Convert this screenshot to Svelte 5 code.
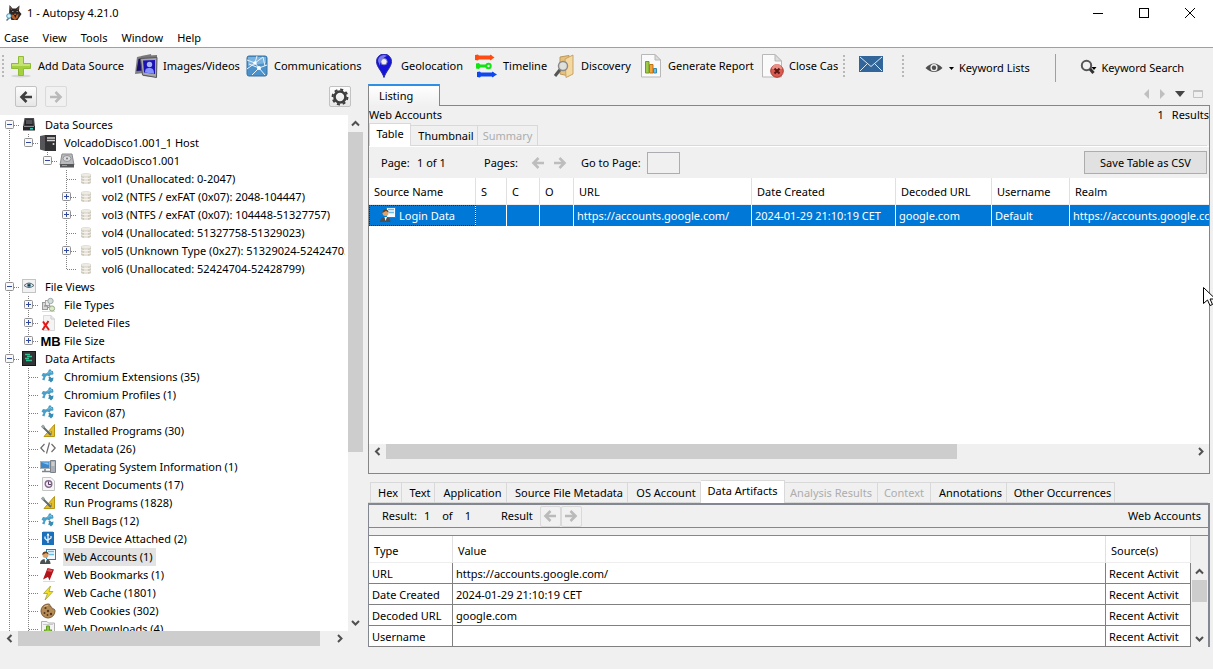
<script>
	const menus = ['Case', 'View', 'Tools', 'Window', 'Help'];

	const tools = [
		{ icon: 'plus', label: 'Add Data Source' },
		{ icon: 'images', label: 'Images/Videos' },
		{ icon: 'network', label: 'Communications' },
		{ icon: 'pin', label: 'Geolocation' },
		{ icon: 'timeline', label: 'Timeline' },
		{ icon: 'discovery', label: 'Discovery' },
		{ icon: 'report', label: 'Generate Report' },
		{ icon: 'close', label: 'Close Case' }
	];

	const nodes = [
		{ level: 0, exp: '-', icon: 'drive', label: 'Data Sources' },
		{ level: 1, exp: '-', icon: 'host', label: 'VolcadoDisco1.001_1 Host' },
		{ level: 2, exp: '-', icon: 'disk', label: 'VolcadoDisco1.001' },
		{ level: 3, exp: '', icon: 'volume', label: 'vol1 (Unallocated: 0-2047)' },
		{ level: 3, exp: '+', icon: 'volume', label: 'vol2 (NTFS / exFAT (0x07): 2048-104447)' },
		{ level: 3, exp: '+', icon: 'volume', label: 'vol3 (NTFS / exFAT (0x07): 104448-51327757)' },
		{ level: 3, exp: '', icon: 'volume', label: 'vol4 (Unallocated: 51327758-51329023)' },
		{ level: 3, exp: '+', icon: 'volume', label: 'vol5 (Unknown Type (0x27): 51329024-52424703)' },
		{ level: 3, exp: '', icon: 'volume', label: 'vol6 (Unallocated: 52424704-52428799)' },
		{ level: 0, exp: '-', icon: 'views', label: 'File Views' },
		{ level: 1, exp: '+', icon: 'types', label: 'File Types' },
		{ level: 1, exp: '+', icon: 'deleted', label: 'Deleted Files' },
		{ level: 1, exp: '+', icon: 'size', label: 'File Size' },
		{ level: 0, exp: '-', icon: 'artifacts', label: 'Data Artifacts' },
		{ level: 1, exp: '', icon: 'puzzle', label: 'Chromium Extensions (35)' },
		{ level: 1, exp: '', icon: 'puzzle', label: 'Chromium Profiles (1)' },
		{ level: 1, exp: '', icon: 'puzzle', label: 'Favicon (87)' },
		{ level: 1, exp: '', icon: 'program', label: 'Installed Programs (30)' },
		{ level: 1, exp: '', icon: 'code', label: 'Metadata (26)' },
		{ level: 1, exp: '', icon: 'computer', label: 'Operating System Information (1)' },
		{ level: 1, exp: '', icon: 'recent', label: 'Recent Documents (17)' },
		{ level: 1, exp: '', icon: 'program', label: 'Run Programs (1828)' },
		{ level: 1, exp: '', icon: 'puzzle', label: 'Shell Bags (12)' },
		{ level: 1, exp: '', icon: 'usb', label: 'USB Device Attached (2)' },
		{ level: 1, exp: '', icon: 'account', label: 'Web Accounts (1)' },
		{ level: 1, exp: '', icon: 'bookmark', label: 'Web Bookmarks (1)' },
		{ level: 1, exp: '', icon: 'bolt', label: 'Web Cache (1801)' },
		{ level: 1, exp: '', icon: 'cookie', label: 'Web Cookies (302)' },
		{ level: 1, exp: '', icon: 'download', label: 'Web Downloads (4)' }
	];

	let selected = $state('Web Accounts (1)');

	const viewTabs = ['Table', 'Thumbnail', 'Summary'];
	const contentTabs = ['Hex', 'Text', 'Application', 'Source File Metadata', 'OS Account', 'Data Artifacts', 'Analysis Results', 'Context', 'Annotations', 'Other Occurrences'];
	const disabledTabs = ['Summary', 'Analysis Results', 'Context'];
	let viewTab = $state('Table');
	let contentTab = $state('Data Artifacts');

	const columns = ['Source Name', 'S', 'C', 'O', 'URL', 'Date Created', 'Decoded URL', 'Username', 'Realm'];
	const record = ['', '', '', 'https://accounts.google.com/', '2024-01-29 21:10:19 CET', 'google.com', 'Default', 'https://accounts.google.com/'];

	const attributes = [
		['URL', 'https://accounts.google.com/'],
		['Date Created', '2024-01-29 21:10:19 CET'],
		['Decoded URL', 'google.com'],
		['Username', '']
	];

	// Does a node at this level have another sibling further down?
	// The artifact list goes on past the last row, so its lines stay open
	function hasNext(index, level) {
		for (let i = index + 1; i < nodes.length; i++) {
			if (nodes[i].level < level) return false;
			if (nodes[i].level === level) return true;
		}
		return level < 2;
	}
</script>

{#snippet guide(node, index, level)}
	<svg class="guide" width="19" height="18" viewBox="0 0 19 18">
		{#if level < node.level}
			{#if hasNext(index, level)}
				<path d="M9.5 0V18" stroke="#808080" stroke-dasharray="1 1" />
			{/if}
		{:else}
			{#if index > 0}
				<path d="M9.5 0V9" stroke="#808080" stroke-dasharray="1 1" />
			{/if}
			{#if hasNext(index, level)}
				<path d="M9.5 10V18" stroke="#808080" stroke-dasharray="1 1" />
			{/if}
			<path d="M10 9.5H19" stroke="#808080" stroke-dasharray="1 1" />
			{#if node.exp}
				<rect x="5.5" y="4.5" width="8" height="8" rx="1" fill="#f8f8f8" stroke="#919191" />
				<path d="M7 8.5H12" stroke="#31479e" />
				{#if node.exp === '+'}
					<path d="M9.5 6V11" stroke="#31479e" />
				{/if}
			{/if}
		{/if}
	</svg>
{/snippet}

{#snippet arrow(dir)}
	<svg width="17" height="17" viewBox="0 0 17 17">
		{#if dir === 'up'}
			<path d="M5 10.5L8.5 7L12 10.5" fill="none" stroke="#505050" stroke-width="2" />
		{:else if dir === 'down'}
			<path d="M5 7L8.5 10.5L12 7" fill="none" stroke="#505050" stroke-width="2" />
		{:else if dir === 'left'}
			<path d="M10.5 5L7 8.5L10.5 12" fill="none" stroke="#505050" stroke-width="2" />
		{:else}
			<path d="M7 5L10.5 8.5L7 12" fill="none" stroke="#505050" stroke-width="2" />
		{/if}
	</svg>
{/snippet}

{#snippet navArrow(dir)}
	<svg width="16" height="16" viewBox="0 0 16 16" fill="none" stroke="currentColor" stroke-width="2.6">
		{#if dir === 'left'}
			<path d="M8.5 3L3.5 8L8.5 13M4 8H14" />
		{:else}
			<path d="M7.5 3L12.5 8L7.5 13M12 8H2" />
		{/if}
	</svg>
{/snippet}

{#snippet toolIcon(name)}
	<svg width="24" height="24" viewBox="0 0 24 24">
		{#if name === 'plus'}
			<ellipse cx="12" cy="22" rx="10" ry="1.5" fill="#d5d5d5" />
			<path d="M9.5 2.5H14.5V9.5H21.5V14.5H14.5V21.5H9.5V14.5H2.5V9.5H9.5Z" fill="#a4d03f" stroke="#8ebc34" />
			<path d="M10 3H14V10H21V12H3V10H10Z" fill="#c4e372" />
		{:else if name === 'images'}
			<path d="M3 3L17 0L19 18L1 20Z" fill="#7d7d80" />
			<path d="M4.5 5L16 2.5L16 16L2.5 17Z" fill="#19106f" />
			<path d="M7 2L23 1V23L9 22Z" fill="#77777b" />
			<path d="M6.5 4.5L23 3.5L22.5 23.5L8.5 21Z" fill="#a6a6aa" stroke="#55555a" />
			<path d="M9 6.5L21 6V20L10 18.5Z" fill="#1c12b4" />
			<circle cx="15.5" cy="10.5" r="2.7" fill="#a8b4ff" />
			<path d="M11 18.6C11 14.5 13 14 15.5 14S20 15 20 19.8Z" fill="#8592ff" />
		{:else if name === 'network'}
			<rect x="2" y="2" width="20" height="20" rx="2" fill="#4b92cc" stroke="#37719f" />
			<path d="M3 3H21V9L3 12Z" fill="#79b2de" />
			<path d="M2 6L10 9L18 3M10 9L14 14L7 21M14 14L22 11M14 14L20 21M2 15L10 9M10 9L12 2M14 14L4 10M18 3L20 12" fill="none" stroke="#e7f3fc" />
			<circle cx="10" cy="9" r="1.7" fill="#fff" />
			<circle cx="14" cy="14" r="2" fill="#fff" />
		{:else if name === 'pin'}
			<path d="M12 23.5C10 17 4.5 13 4.5 7.5A7.5 7.5 0 0 1 19.5 7.5C19.5 13 14 17 12 23.5Z" fill="#1414d8" stroke="#2a2aa5" />
			<path d="M6 7A6 6 0 0 1 15 1.8C10 4 8 8 8 12Z" fill="#7777f0" />
			<circle cx="12" cy="7.7" r="3.2" fill="#efefef" stroke="#7878b8" />
		{:else if name === 'timeline'}
			<path d="M3 3.5H18" stroke="#ff4b12" stroke-width="4" />
			<path d="M3 12H15" stroke="#13e313" stroke-width="3" />
			<path d="M5 20.5H20" stroke="#0d47ef" stroke-width="4" />
			<g fill="#ff4b12"><path d="M1 1L4 0.5L6 3.5L4 6.5L1 6Z" /><path d="M16 0.5L20.5 3.5L16 6.5Z" /></g>
			<g fill="#13e313"><path d="M2 9.5L5 9L7 12L5 15L2 14.5Z" /><circle cx="14.5" cy="12" r="3.2" /></g>
			<circle cx="14.5" cy="12" r="1.2" fill="#efefef" />
			<g fill="#0d47ef"><path d="M3 18L6 17.5L8 20.5L6 23.500L3 23Z" /><path d="M18 17.5L23 20.5L18 23.5Z" /></g>
		{:else if name === 'discovery'}
			<path d="M8 3L17 1.5V22L8 20Z" fill="#e6c17d" stroke="#bd9857" />
			<path d="M13 5L21 1V20L14 23.5Z" fill="#f4d8a0" stroke="#c7a367" />
			<path d="M8.5 15L3 22" stroke="#555" stroke-width="3" />
			<circle cx="11" cy="12" r="4.5" fill="#dfe6ec" fill-opacity="0.85" stroke="#8a8a8a" stroke-width="1.5" />
		{:else if name === 'report'}
			<path d="M2.5 0.5H16L21.5 6V23H2.5Z" fill="#fafafa" stroke="#b8b8b8" />
			<path d="M16 0.5V6H21.5Z" fill="#ddd" stroke="#b8b8b8" />
			<path d="M6.5 7.5H10V19H6.500Z" fill="#9dcb49" stroke="#6f9a27" />
			<path d="M10.5 10.5H14V19H10.5Z" fill="#f3a23c" stroke="#bd7317" />
			<path d="M14.5 14.5H17.5V19H14.5Z" fill="#68bfe8" stroke="#338ab3" />
		{:else}
			<path d="M2.5 0.5H15L21.5 7V23H2.5Z" fill="#fafafa" stroke="#b8b8b8" />
			<path d="M15 0.5V7H21.5Z" fill="#ddd" stroke="#b8b8b8" />
			<circle cx="17" cy="17" r="6.3" fill="#db5b50" stroke="#a93c34" />
			<path d="M12 15A5 5 0 0 1 22 15Z" fill="#ec9087" />
			<path d="M14.5 14.5L19.5 19.5M19.5 14.5L14.5 19.5" stroke="#5d1712" stroke-width="2" />
		{/if}
	</svg>
{/snippet}

{#snippet treeIcon(name)}
	<svg width="16" height="16" viewBox="0 0 16 16">
		{#if name === 'drive'}
			<path d="M3.5 1H13L14 10H2Z" fill="#4a4a4f" />
			<path d="M4.5 2.5H12L12.5 8.5H3.5Z" fill="#202024" />
			<path d="M5 4H11.5M5 6H11.5" stroke="#88888d" />
			<rect x="2" y="9" width="12" height="4.5" fill="#27272b" />
			<path d="M3 9.5H13" stroke="#8e8e93" />
			<rect x="9" y="11" width="3" height="1.5" fill="#38c7b4" />
		{:else if name === 'host'}
			<path d="M0 1L5 0V16L0 14.5Z" fill="#56565a" />
			<rect x="5" y="0" width="11" height="16" fill="#323235" />
			<path d="M7 3H15M7 5.5H15" stroke="#d4d4d4" stroke-width="1.3" />
			<circle cx="13.5" cy="9" r="1" fill="#ddd" />
		{:else if name === 'disk'}
			<path d="M3 1H13L15 12H1Z" fill="#b9babd" stroke="#8c8c8f" />
			<ellipse cx="8" cy="5.5" rx="4" ry="3" fill="#d9dadc" stroke="#949599" />
			<circle cx="8" cy="5.5" r="1" fill="#77777a" />
			<rect x="1" y="11" width="14" height="3.5" fill="#55565a" />
			<path d="M3 12.5H8" stroke="#9b9b9e" />
		{:else if name === 'volume'}
			<path d="M3 4V11.5C3 13.5 13 13.5 13 11.5V4Z" fill="#d0cabd" />
			<path d="M6 4H10V13H6Z" fill="#e6e2d8" />
			<path d="M3 6.5C4 8 12 8 13 6.5M3 9.5C4 11 12 11 13 9.5" fill="none" stroke="#f8f6f1" />
			<ellipse cx="8" cy="4" rx="5" ry="1.5" fill="#f0ede6" stroke="#d8d4ca" stroke-width="0.7" />
		{:else if name === 'views'}
			<rect x="1.5" y="0.5" width="13" height="13" fill="#f2f2f2" stroke="#c4c4c4" />
			<path d="M3 6.5Q8 1.5 13 6.5Q8 10.5 3 6.5Z" fill="#e1e7ea" stroke="#59666d" />
			<circle cx="8" cy="6.200" r="2" fill="#528199" />
			<circle cx="8" cy="6.2" r="0.9" fill="#15252d" />
		{:else if name === 'types'}
			<path d="M2 14.5H15" stroke="#ddd" />
			<rect x="2.5" y="5.5" width="5" height="7" fill="#d7d7d7" stroke="#999" />
			<rect x="5.5" y="3.5" width="4" height="5" fill="#ebebeb" stroke="#a6a6a6" />
			<circle cx="10.5" cy="4" r="2.7" fill="#d5dedc" stroke="#9eaaa7" />
			<circle cx="12" cy="11.5" r="2.6" fill="#dceacb" stroke="#96ab83" />
			<path d="M4 9H7M10 8.5L8 11" stroke="#858585" />
		{:else if name === 'deleted'}
			<path d="M3.5 0.5H11L14.5 4V15.5H3.5Z" fill="#f4f4f4" stroke="#d9d9d9" />
			<path d="M11 0.5V4H14.5" fill="none" stroke="#cacaca" />
			<path d="M3 6.5L9 15M8.5 6L2.5 15" stroke="#e31515" stroke-width="2" />
		{:else if name === 'artifacts'}
			<rect x="1.5" y="0.5" width="13" height="14" fill="#333536" stroke="#161818" />
			<path d="M4 3.5H9M6 5.5H11M4 7.5H8M5 9.500H11" stroke="#2fc393" stroke-width="1.5" />
		{:else if name === 'puzzle'}
			<path d="M9 0.5L11 0.5L11.500 2H13L13.5 5L12 6L11 5.5L9.5 7.5L7 6.5L5.5 8L4.5 11.5L2 10.5L3.5 8L1.5 6.500L3 4L6 4.5L8 3Z" fill="#4a9fc6" />
			<path d="M8.5 8L10 7.5L11.5 9L13.5 8.5L13 11.5L11 13.5L9.5 12L8 11.5L9 10Z" fill="#378db6" />
			<path d="M8 4.5L10 2.5L12 3.5" fill="none" stroke="#8cc8e2" />
		{:else if name === 'program'}
			<path d="M14.5 1.5V13.5H4Z" fill="#e3bf2d" stroke="#b89514" />
			<path d="M11.5 8V11H8.5Z" fill="#fff7c9" stroke="#b89514" />
			<path d="M2 3L11 12" stroke="#626b6c" stroke-width="2" />
			<path d="M2 2.500L4 4.5" stroke="#9ba7a9" stroke-width="3" />
		{:else if name === 'code'}
			<path d="M4.5 3L0.8 7L4.5 11M11.5 3L15.2 7L11.5 11M9.5 1.5L6.5 12.5" fill="none" stroke="#6c6c6c" stroke-width="1.2" />
		{:else if name === 'computer'}
			<rect x="0.5" y="2.5" width="9" height="7" fill="#3c88ca" stroke="#a6b1ba" />
			<path d="M1.5 3.5H8.5V6Z" fill="#8dc4ec" />
			<path d="M2 12.5H10M5 10V12" stroke="#7d8388" stroke-width="1.5" />
			<path d="M10.5 1.5H15.5V13.5H10.5Z" fill="#a9afb4" stroke="#7d8388" />
			<path d="M11.5 4H14.5M11.5 6H14.5" stroke="#eee" />
		{:else if name === 'recent'}
			<path d="M2.5 0.5H11L14.5 4V13.5H2.5Z" fill="#f6f6f6" stroke="#c4c4c4" />
			<circle cx="8.5" cy="7" r="3.3" fill="#efe6f2" stroke="#83658f" stroke-width="1.4" />
			<path d="M8.500 4.5V7.5H11" fill="none" stroke="#544059" />
		{:else if name === 'usb'}
			<rect x="2" y="1" width="12" height="13" fill="#1c70b9" />
			<path d="M3 0.5H13" stroke="#c3d7a7" />
			<path d="M8 3V12M8 10L5 7.5V5.5M8 9L11 7V5" fill="none" stroke="#e7f4ff" stroke-width="1.3" />
			<path d="M8 2L6.5 4.5H9.5Z" fill="#fff" />
		{:else if name === 'account'}
			<rect x="6.5" y="0.500" width="9" height="10" fill="#f4faff" stroke="#1787c4" />
			<path d="M8 2.5H14M9 5.5H14" stroke="#66bde8" stroke-width="1.5" />
			<path d="M0 15C0 11 3 10 5.5 10S10.5 11 10.5 15Z" fill="#4b5053" />
			<path d="M4.5 10L5.5 14L7 10Z" fill="#fff" />
			<circle cx="5.5" cy="6" r="3" fill="#dca46d" />
			<path d="M2.3 6C2 1.5 8.5 1.5 8.7 5.500L6 4Z" fill="#6b3d17" />
		{:else if name === 'bookmark'}
			<path d="M3 14.5H15" stroke="#ddd" />
			<path d="M7.5 1L14 2.5L9.500 13.5L8 10L3 12.5Z" fill="#b3141c" />
			<path d="M8 2L12.5 3L11.5 5L7 4Z" fill="#e05357" />
		{:else if name === 'bolt'}
			<path d="M10.5 1L3.5 8.5H7.5L5 15L13 6.5H9Z" fill="#f1df24" stroke="#a59e35" stroke-width="0.8" />
		{:else if name === 'cookie'}
			<path d="M8 1C10 1 10.5 2 10 3.5C12 3.5 12 5 12.5 6C14 5.5 15 6.5 15 8A7 7 0 1 1 8 1Z" fill="#b48a57" stroke="#7e5c34" />
			<path d="M4 4A5 5 0 0 1 8 2.5" fill="none" stroke="#dbb98a" />
			<g fill="#54351b"><circle cx="5.5" cy="5" r="1.1" /><circle cx="8" cy="8" r="1.2" /><circle cx="4.5" cy="10" r="1" /><circle cx="11" cy="11" r="1.2" /><circle cx="7.5" cy="12" r="0.9" /></g>
		{:else if name === 'download'}
			<path d="M1.5 0.5H7L8.5 2H14.5V14.5H1.5Z" fill="#f2f2f2" stroke="#b0b0b0" />
			<path d="M3 3.5H13" stroke="#c9c9c9" />
			<path d="M6.5 5H9.5V9H12L8 13.5L4 9H6.5Z" fill="#8dc63f" stroke="#669c22" />
		{/if}
	</svg>
{/snippet}

<div class="window">
	<header class="titlebar">
		<svg width="16" height="16" viewBox="0 0 16 16">
			<path d="M3.5 0L6.5 3.500H10L13.5 0.5L13 6L15.500 9L11.5 15H5.5L3 10Z" fill="#2c2624" />
			<path d="M6 9.500L8 10L9 8L10.500 10L12.5 9L12 12.5L9 15L6 13Z" fill="#b5622b" />
			<path d="M8 10H10.500L9.300 13Z" fill="#181413" />
			<path d="M6 6.500H7.500M10.500 6.500H12" stroke="#c9793a" />
			<path d="M4.500 2L5.5 5M12.5 2.5L11.500 5" stroke="#7a5a4c" />
			<path d="M4 12L0.5 15.5" stroke="#66757c" stroke-width="1.5" />
			<circle cx="3" cy="11" r="2.3" fill="#d3effa" stroke="#4c95b5" />
		</svg>
		<span class="title">1 - Autopsy 4.21.0</span>
		<button class="win-button" aria-label="Minimize">
			<svg width="12" height="12" viewBox="0 0 12 12"><path d="M1 6.5H11" stroke="#000" /></svg>
		</button>
		<button class="win-button" aria-label="Maximize">
			<svg width="12" height="12" viewBox="0 0 12 12"><rect x="1.5" y="1.5" width="9" height="9" fill="none" stroke="#000" /></svg>
		</button>
		<button class="win-button" aria-label="Close">
			<svg width="12" height="12" viewBox="0 0 12 12"><path d="M1 1L11 11M11 1L1 11" stroke="#000" /></svg>
		</button>
	</header>

	<nav class="menubar">
		{#each menus as menu}
			<button class="menu">{menu}</button>
		{/each}
	</nav>

	<div class="toolbar">
		<i class="grip"></i>
		<div class="tools">
			{#each tools as tool}
				<button class="tool">
					{@render toolIcon(tool.icon)}
					{tool.label}
				</button>
			{/each}
		</div>
		<i class="grip"></i>
		<button class="mail" aria-label="Messages">
			<svg width="24" height="16" viewBox="0 0 24 16">
				<rect width="24" height="16" fill="#32669b" />
				<path d="M1 1L12 10.5L23 1M1 15L8.5 7.5M23 15L15.5 7.5" fill="none" stroke="#d8e6f2" />
			</svg>
		</button>
		<i class="grip"></i>
		<button class="keyword lists">
			<svg width="30" height="18" viewBox="0 0 30 18">
				<path d="M0.5 9Q9 0 17.5 9Q9 17 0.5 9Z" fill="#4f4f4f" />
				<circle cx="9" cy="8.7" r="3.6" fill="#efefef" />
				<circle cx="9" cy="8.7" r="2.2" fill="#4f4f4f" />
				<path d="M24 8H29L26.5 11Z" fill="#000" />
			</svg>
			Keyword Lists
		</button>
		<button class="keyword search">
			<svg width="18" height="18" viewBox="0 0 18 18">
				<circle cx="6.5" cy="6.5" r="4.7" fill="none" stroke="#555" stroke-width="2" />
				<path d="M10 10L13.5 14" stroke="#333" stroke-width="3" />
				<path d="M11.5 8H16.5L14 11Z" fill="#000" />
			</svg>
			Keyword Search
		</button>
	</div>

	<div class="workspace">
		<aside class="explorer">
			<div class="explorer-bar">
				<button class="square" aria-label="Back">{@render navArrow('left')}</button>
				<button class="square" aria-label="Forward" disabled>{@render navArrow('right')}</button>
				<button class="square settings" aria-label="Settings">
					<svg width="18" height="18" viewBox="0 0 18 18">
						<circle cx="9" cy="9" r="5.5" fill="none" stroke="#3d3d3d" stroke-width="2.6" />
						<circle cx="9" cy="9" r="7.4" fill="none" stroke="#3d3d3d" stroke-width="2" stroke-dasharray="3 2.8" />
					</svg>
				</button>
			</div>
			<div class="tree-area">
				<ul class="tree">
					{#each nodes as node, index}
						<li>
							{#each { length: node.level + 1 } as _, level}
								{@render guide(node, index, level)}
							{/each}
							<span class="tree-icon">
								{#if node.icon === 'size'}
									<b class="mb">MB</b>
								{:else}
									{@render treeIcon(node.icon)}
								{/if}
							</span>
							<button class="node" class:selected={node.label === selected} onclick={() => (selected = node.label)}>{node.label}</button>
						</li>
					{/each}
				</ul>
				<div class="scroll vertical">
					{@render arrow('up')}
					<i class="thumb tree-v"></i>
					{@render arrow('down')}
				</div>
			</div>
			<div class="scroll horizontal tree-scroll">
				{@render arrow('left')}
				<i class="thumb tree-h"></i>
				{@render arrow('right')}
			</div>
		</aside>

		<main class="content">
			<div class="editor-tabs">
				<button class="listing">Listing</button>
				<div class="editor-controls">
					<svg width="64" height="12" viewBox="0 0 64 12">
						<path d="M7 1V11L2 6Z" fill="#bfbfbf" />
						<path d="M18 1V11L23 6Z" fill="#bfbfbf" />
						<path d="M33 3H43L38 9Z" fill="#444" />
						<path d="M51.5 2.5H60.5V9.5H51.5ZM51.5 3.5H60.5" fill="none" stroke="#c3c3c3" />
					</svg>
				</div>
			</div>

			<section class="listing-pane">
				<div class="path-row">
					<span>Web Accounts</span>
					<span class="count"><span>1</span> Results</span>
				</div>
				<div class="tabs view-tabs" role="tablist">
					{#each viewTabs as tab}
						<button role="tab" class="tab" class:active={tab === viewTab} aria-selected={tab === viewTab} disabled={disabledTabs.includes(tab)} onclick={() => (viewTab = tab)}>{tab}</button>
					{/each}
				</div>
				<div class="pager">
					<span class="page">Page:</span>
					<span class="page-count">1 of 1</span>
					<span class="pages">Pages:</span>
					<button class="flat" aria-label="Previous page" disabled>{@render navArrow('left')}</button>
					<button class="flat" aria-label="Next page" disabled>{@render navArrow('right')}</button>
					<label for="goto">Go to Page:</label>
					<input id="goto" type="text" />
					<button class="save">Save Table as CSV</button>
				</div>
				<div class="results">
					<table class="result-table">
						<colgroup>
							<col class="c-name" /><col class="c-s" /><col class="c-c" /><col class="c-o" /><col class="c-url" />
							<col class="c-date" /><col class="c-decoded" /><col class="c-user" /><col />
						</colgroup>
						<thead>
							<tr>
								{#each columns as column}
									<th>{column}</th>
								{/each}
							</tr>
						</thead>
						<tbody>
							<tr>
								<td class="focused"><span class="name">{@render treeIcon('account')} Login Data</span></td>
								{#each record as value}
									<td>{value}</td>
								{/each}
							</tr>
						</tbody>
					</table>
				</div>
				<div class="scroll horizontal">
					{@render arrow('left')}
					<i class="thumb list-h"></i>
					{@render arrow('right')}
				</div>
			</section>

			<section class="details">
				<div class="tabs content-tabs" role="tablist">
					{#each contentTabs as tab}
						<button role="tab" class="tab" class:active={tab === contentTab} aria-selected={tab === contentTab} disabled={disabledTabs.includes(tab)} onclick={() => (contentTab = tab)}>{tab}</button>
					{/each}
				</div>
				<div class="detail-pane">
					<div class="result-bar">
						<span class="caption">Result:</span>
						<span class="value">1</span>
						<span class="value">of</span>
						<span class="value">1</span>
						<span class="result-nav">Result</span>
						<button class="square" aria-label="Previous result" disabled>{@render navArrow('left')}</button>
						<button class="square" aria-label="Next result" disabled>{@render navArrow('right')}</button>
						<span class="source">Web Accounts</span>
					</div>
					<div class="attributes">
						<table class="attribute-table">
							<colgroup><col class="c-type" /><col /><col class="c-source" /></colgroup>
							<thead>
								<tr><th>Type</th><th>Value</th><th>Source(s)</th></tr>
							</thead>
							<tbody>
								{#each attributes as [type, value]}
									<tr><td>{type}</td><td>{value}</td><td>Recent Activit</td></tr>
								{/each}
							</tbody>
						</table>
						<div class="scroll vertical attr-scroll">
							{@render arrow('up')}
							<i class="thumb attr-v"></i>
							{@render arrow('down')}
						</div>
					</div>
				</div>
			</section>
		</main>
	</div>

	<svg class="cursor" width="13" height="20" viewBox="0 0 13 20">
		<path d="M0.5 0.5V16.5L4.5 13L7 18.5L9.5 17.5L7 12H12.5Z" fill="#fff" stroke="#000" />
	</svg>
</div>

<style>
	:global(body) {
		background: #f0f0f0;
	}

	.window {
		position: relative;
		height: 100vh;
		display: flex;
		flex-direction: column;
		overflow: hidden;
		background: #f0f0f0;
		color: #000;
		font-family: 'Noto Sans', sans-serif;
		font-size: 11px;
		line-height: 18px;
		white-space: nowrap;
	}

	button {
		margin: 0;
		padding: 0;
		border: 0;
		background: none;
		color: inherit;
		font: inherit;
		white-space: nowrap;
	}

	svg {
		flex: none;
		display: block;
	}

	/* title bar and menu */
	.titlebar {
		flex: none;
		display: flex;
		align-items: center;
		height: 26px;
		padding-left: 6px;
		background: #fff;
	}

	.title {
		flex: 1;
		padding-left: 5px;
	}

	.win-button {
		display: flex;
		justify-content: center;
		width: 46px;
	}

	.menubar {
		flex: none;
		display: flex;
		gap: 14px;
		height: 20px;
		padding: 1px 4px 0;
		background: #fff;
		border-bottom: 1px solid #a0a0a0;
	}

	.menu {
		height: 22px;
	}

	/* toolbar */
	.toolbar {
		flex: none;
		display: flex;
		align-items: center;
		height: 35px;
		padding: 0 29px 0 2px;
	}

	.grip {
		flex: none;
		width: 2px;
		height: 22px;
		background: repeating-linear-gradient(#b8b8b8 0 2px, transparent 2px 4px);
	}

	.tools {
		display: grid;
		grid-template-columns: 125px 111px 127px 102px 78px 87px 121px 78px;
		width: 829px;
		padding-left: 5px;
		margin-right: 5px;
		overflow: hidden;
	}

	.tool {
		display: flex;
		align-items: center;
		gap: 5px;
		overflow: hidden;
	}

	.mail {
		margin: 0 19px 4px 14px;
	}

	.keyword {
		display: flex;
		align-items: center;
		gap: 4px;
		height: 28px;
		margin-top: 4px;
	}

	.lists {
		flex: 1;
		margin-left: 21px;
		border-right: 1px solid #a0a0a0;
	}

	.search {
		padding-left: 24px;
	}

	.workspace {
		flex: 1;
		min-height: 0;
		display: flex;
		padding: 0 3px 22px 0;
	}

	/* left side */
	.explorer {
		flex: none;
		display: flex;
		flex-direction: column;
		width: 30%;
		margin-right: 5px;
	}

	.explorer-bar {
		flex: none;
		display: flex;
		align-items: center;
		gap: 8px;
		height: 32px;
		padding: 0 12px 5px 15px;
		box-sizing: border-box;
	}

	.square {
		display: flex;
		align-items: center;
		justify-content: center;
		width: 22px;
		height: 21px;
		border: 1px solid #c2c2c2;
		border-radius: 2px;
		background: linear-gradient(#fdfdfd, #e6e6e6);
		color: #3f3f3f;
	}

	.square:disabled {
		border-color: #dadada;
		background: #f1f1f1;
		color: #bababa;
	}

	.settings {
		margin-left: auto;
	}

	.tree-area {
		flex: 1;
		min-height: 0;
		display: flex;
	}

	.tree {
		flex: 1;
		min-width: 0;
		margin: 0;
		padding: 1px 3px 0 0;
		overflow: hidden;
		list-style: none;
		background: #fff;
	}

	.tree li {
		display: flex;
		align-items: center;
		height: 18px;
	}

	.tree-icon {
		flex: none;
		display: flex;
		justify-content: center;
		width: 19px;
		margin-right: 6px;
	}

	.mb {
		margin-left: 6px;
		font: bold 13px 'Liberation Sans', sans-serif;
	}

	.node {
		min-width: 0;
		height: 18px;
		padding: 0 3px 0 1px;
		overflow: hidden;
	}

	.selected {
		background: #e3e3e3;
	}

	/* scroll bars */
	.scroll {
		flex: none;
		display: flex;
		align-items: center;
		background: #f0f0f0;
	}

	.vertical {
		flex-direction: column;
		width: 15px;
	}

	.horizontal {
		height: 15px;
	}

	.thumb {
		background: #cdcdcd;
	}

	.vertical .thumb {
		width: 15px;
		margin-bottom: auto;
	}

	.horizontal .thumb {
		height: 15px;
		margin-right: auto;
	}

	.tree-scroll {
		margin-right: 15px;
		padding-left: 1px;
		margin-bottom: 1px;
	}

	.tree-v {
		height: 62%;
	}

	.tree-h {
		width: 87%;
	}

	.list-h {
		width: 68%;
	}

	/* right side */
	.content {
		flex: 1;
		min-width: 0;
		display: flex;
		flex-direction: column;
	}

	.editor-tabs {
		flex: none;
		display: flex;
		justify-content: space-between;
		height: 21px;
		margin-top: 1px;
	}

	.listing {
		width: 72px;
		height: 22px;
		padding: 0 0 1px 10px;
		box-sizing: border-box;
		border: 1px solid #868686;
		border-width: 0 1px;
		border-top: 2px solid #2f8fe6;
		background: linear-gradient(#fff, #f0f0f0);
		text-align: left;
		z-index: 1;
	}

	.editor-controls {
		padding: 4px 4px 0 0;
	}

	.listing-pane {
		flex: 1;
		min-height: 0;
		display: flex;
		flex-direction: column;
		padding-bottom: 14px;
		border: 1px solid #868686;
	}

	.path-row {
		flex: none;
		display: flex;
		justify-content: space-between;
		height: 17px;
	}

	.count {
		display: flex;
		gap: 8px;
	}

	.tabs {
		flex: none;
		display: grid;
		align-items: end;
		border-bottom: 1px solid #d9d9d9;
	}

	.view-tabs {
		grid-template-columns: 42px 67px 60px;
		height: 22px;
		margin-right: 2px;
	}

	.content-tabs {
		grid-template-columns: 32px 33px 72px 121px 73px 84px 93px 53px 76px 108px;
		height: 22px;
		padding-left: 2px;
		margin-right: 2px;
	}

	.tab {
		height: 20px;
		padding-left: 4px;
		border: 1px solid #d9d9d9;
		border-bottom: 0;
		border-left-width: 0;
	}

	.tab:first-child {
		border-left-width: 1px;
	}

	.tab.active {
		height: 23px;
		margin-bottom: -1px;
		padding: 0 0 2px;
		background: #fff;
	}

	.tab:disabled {
		padding: 0;
		color: #adadad;
	}

	.pager {
		flex: none;
		display: flex;
		align-items: center;
		height: 31px;
		padding: 0 2px 0 12px;
		border-top: 1px solid #fff;
	}

	.page {
		width: 36px;
	}

	.page-count {
		width: 67px;
	}

	.pages {
		width: 46px;
	}

	.flat {
		width: 22px;
		color: #bdbdbd;
	}

	.pager label {
		width: 66px;
		padding-left: 7px;
	}

	.pager input {
		width: 33px;
		height: 22px;
		box-sizing: border-box;
		border: 1px solid #abadb3;
		background: #f0f0f0;
		font: inherit;
	}

	.save {
		width: 123px;
		height: 23px;
		margin-left: auto;
		border: 1px solid #adadad;
		background: #e1e1e1;
	}

	.results {
		flex: 1;
		min-height: 0;
		overflow: hidden;
		background: #fff;
	}

	table {
		width: 100%;
		table-layout: fixed;
		border-collapse: separate;
		border-spacing: 0;
	}

	th,
	td {
		padding: 0 0 0 3px;
		overflow: hidden;
		box-sizing: border-box;
		text-align: left;
		font-weight: normal;
	}

	th {
		height: 27px;
		padding: 2px 0 0 5px;
		border-right: 1px solid #e0e0e0;
		border-bottom: 1px solid #eee;
		background: #fff;
	}

	.result-table td {
		height: 21px;
		background: #0078d7;
		border-right: 1px solid #fff;
		color: #fff;
	}

	.result-table th:last-child,
	.result-table td:last-child {
		border-right: 0;
	}

	.result-table .focused {
		outline: 1px dotted #4a2600;
		outline-offset: -1px;
	}

	.name {
		display: flex;
		gap: 3px;
		padding-left: 8px;
	}

	.c-name { width: 107px; }
	.c-s { width: 31px; }
	.c-c { width: 33px; }
	.c-o { width: 34px; }
	.c-url { width: 178px; }
	.c-date { width: 144px; }
	.c-decoded { width: 96px; }
	.c-user { width: 78px; }

	/* artifact details */
	.details {
		flex: none;
		margin-top: 6px;
	}

	.detail-pane {
		border: 1px solid #828790;
		border-width: 0 2px 0 1px;
	}

	.result-bar {
		display: flex;
		align-items: center;
		height: 22px;
		padding: 0 7px 0 13px;
		border-top: 2px solid #828790;
		border-bottom: 1px solid #828790;
	}

	.caption {
		margin-right: 7px;
	}

	.value {
		margin-right: 12px;
	}

	.result-nav {
		margin: 0 7px 0 18px;
	}

	.result-bar .square {
		width: 21px;
	}

	.source {
		margin-left: auto;
	}

	.attributes {
		display: flex;
		margin-top: 7px;
		border-top: 1px solid #828790;
	}

	.attribute-table {
		flex: 1;
		width: auto;
		min-width: 0;
	}

	.attribute-table th {
		padding-top: 4px;
	}

	.attribute-table td {
		height: 21px;
		padding-top: 1px;
		border-right: 1px solid #808080;
		border-bottom: 1px solid #808080;
		background: #fff;
	}

	.c-type { width: 84px; }
	.c-source { width: 85px; }

	.attr-scroll {
		margin: 27px 1px 0;
	}

	.attr-v {
		height: 22px;
	}

	.cursor {
		position: absolute;
		left: 1203px;
		top: 287px;
	}
</style>
